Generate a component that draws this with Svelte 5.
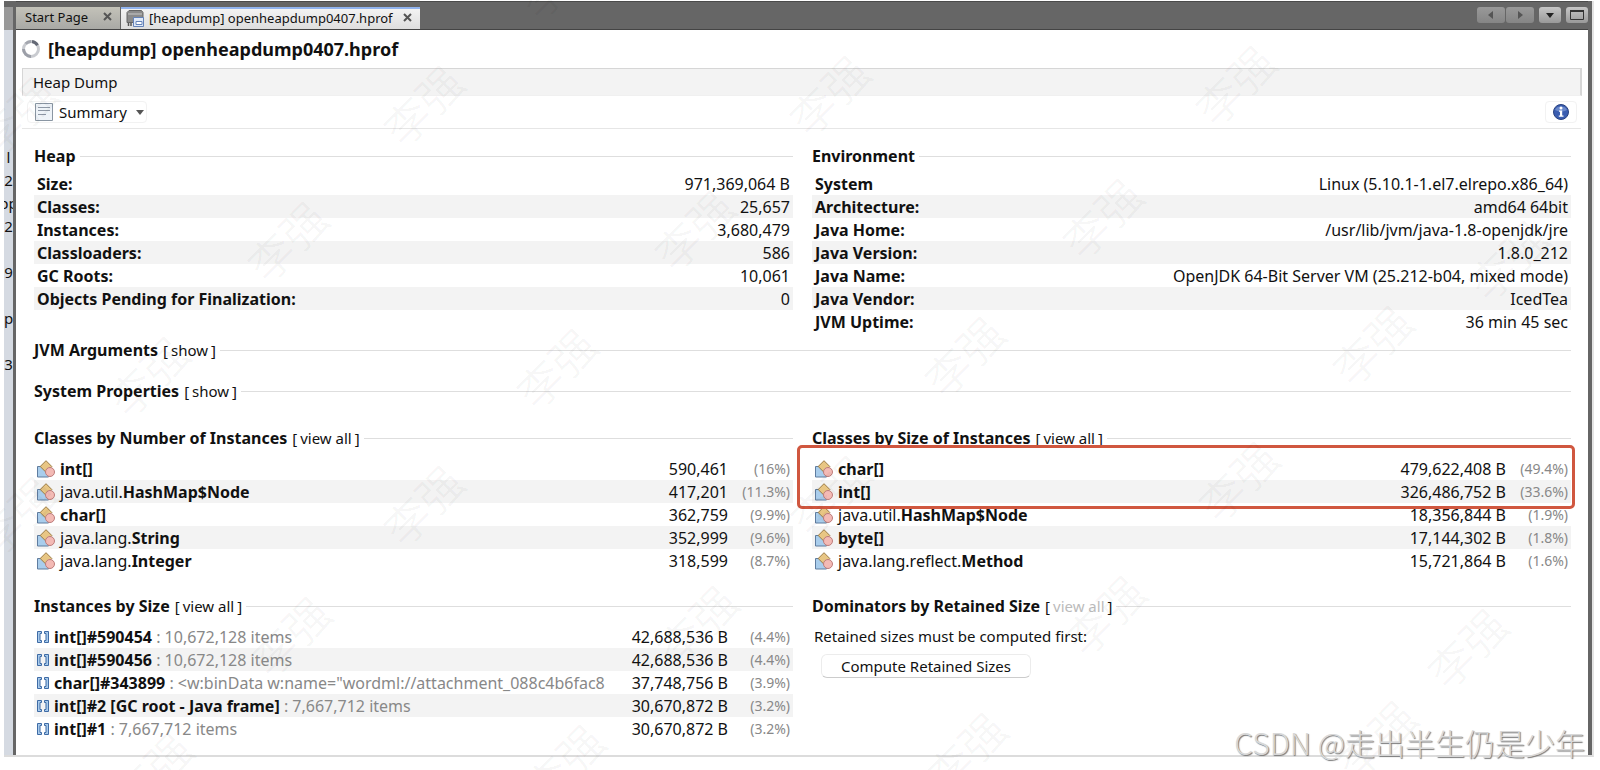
<script lang="ts">
    const edge = ["l", "2", "pp", "2", "", "9", "", "p", "", "3"]

    const heap = [
        ["Size:", "971,369,064 B"],
        ["Classes:", "25,657"],
        ["Instances:", "3,680,479"],
        ["Classloaders:", "586"],
        ["GC Roots:", "10,061"],
        ["Objects Pending for Finalization:", "0"],
    ]

    const environment = [
        ["System", "Linux (5.10.1-1.el7.elrepo.x86_64)"],
        ["Architecture:", "amd64 64bit"],
        ["Java Home:", "/usr/lib/jvm/java-1.8-openjdk/jre"],
        ["Java Version:", "1.8.0_212"],
        ["Java Name:", "OpenJDK 64-Bit Server VM (25.212-b04, mixed mode)"],
        ["Java Vendor:", "IcedTea"],
        ["JVM Uptime:", "36 min 45 sec"],
    ]

    const byCount = [
        { pkg: "", name: "int[]", value: "590,461", share: "(16%)" },
        { pkg: "java.util.", name: "HashMap$Node", value: "417,201", share: "(11.3%)" },
        { pkg: "", name: "char[]", value: "362,759", share: "(9.9%)" },
        { pkg: "java.lang.", name: "String", value: "352,999", share: "(9.6%)" },
        { pkg: "java.lang.", name: "Integer", value: "318,599", share: "(8.7%)" },
    ]

    const bySize = [
        { pkg: "", name: "char[]", value: "479,622,408 B", share: "(49.4%)" },
        { pkg: "", name: "int[]", value: "326,486,752 B", share: "(33.6%)" },
        { pkg: "java.util.", name: "HashMap$Node", value: "18,356,844 B", share: "(1.9%)" },
        { pkg: "", name: "byte[]", value: "17,144,302 B", share: "(1.8%)" },
        { pkg: "java.lang.reflect.", name: "Method", value: "15,721,864 B", share: "(1.6%)" },
    ]

    const instances = [
        { name: "int[]#590454", detail: "10,672,128 items", value: "42,688,536 B", share: "(4.4%)" },
        { name: "int[]#590456", detail: "10,672,128 items", value: "42,688,536 B", share: "(4.4%)" },
        { name: "char[]#343899", detail: '<w:binData w:name="wordml://attachment_088c4b6fac8', value: "37,748,756 B", share: "(3.9%)" },
        { name: "int[]#2 [GC root - Java frame]", detail: "7,667,712 items", value: "30,670,872 B", share: "(3.2%)" },
        { name: "int[]#1", detail: "7,667,712 items", value: "30,670,872 B", share: "(3.2%)" },
    ]

    // centres of the repeated user name stamped over the window
    const stamps = [
        [558, -23], [15, 115], [422, 104], [828, 94], [1234, 84], [1641, 73],
        [286, 240], [693, 229], [1101, 217], [1507, 259],
        [147, 375], [555, 367], [963, 355], [1371, 344],
        [15, 515], [422, 504], [829, 494], [1237, 480], [1641, 469],
        [289, 635], [696, 624], [1104, 614], [1466, 647],
        [151, 771], [563, 763], [965, 751], [1375, 739],
    ]
</script>

{#snippet facts(rows: string[][])}
    <table>
        <tbody>
            {#each rows as [label, value]}
                <tr>
                    <th scope="row">{label}</th>
                    <td class="value">{value}</td>
                </tr>
            {/each}
        </tbody>
    </table>
{/snippet}

{#snippet heading(title: string, action: string = "", disabled: boolean = false)}
    <div class="heading">
        <h2>{title}</h2>
        {#if action}
            <span class="action">[<button {disabled}>{action}</button>]</span>
        {/if}
        <span class="rule"></span>
    </div>
{/snippet}

{#snippet classTable(rows: typeof byCount)}
    <table>
        <tbody>
            {#each rows as row}
                <tr>
                    <td>
                        <span class="entry">
                            <svg class="class-icon" viewBox="0 0 18 18" aria-hidden="true">
                                <path d="M.5 6.500h7l4 4v6.500H.5z" fill="#a9cdec" stroke="#5f7c9f" />
                                <path d="M9 .7l5.800 5.800L9 12.300 3.200 6.500z" fill="#e8c684" stroke="#9a7a43" />
                                <circle cx="13" cy="12" r="4.500" fill="#f3bab5" stroke="#bd7c7b" />
                            </svg>
                            <span>{row.pkg}<b>{row.name}</b></span>
                        </span>
                    </td>
                    <td class="value">{row.value}</td>
                    <td class="share">{row.share}</td>
                </tr>
            {/each}
        </tbody>
    </table>
{/snippet}

<div class="window">
    <aside>
        <div class="edge-top"></div>
        {#each edge as text}
            <span>{text}</span>
        {/each}
    </aside>

    <div class="main">
        <nav>
            <div class="tab">
                <a href="#start">Start Page</a>
                <button class="close" aria-label="Close Start Page">
                    <svg viewBox="0 0 9 9"><path d="M1 1l7 7M8 1l-7 7" /></svg>
                </button>
            </div>
            <div class="tab active">
                <svg class="tab-icon" viewBox="0 0 18 18" aria-hidden="true">
                    <path d="M3 1.500h12.500l1.500 2v10H1v-10z" fill="#8b8b8b" stroke="#666" />
                    <path d="M2 5h14" stroke="#c8c8c8" />
                    <path d="M2.500 14v3M5 14v3" stroke="#555" stroke-width="1.500" />
                    <path d="M7.500 8.500h10v9h-10z" fill="#dfe9f8" stroke="#6583b9" />
                    <path d="M10 12.500h6v3h-6z" fill="#fff" stroke="#6583b9" />
                </svg>
                <a href="#heap">[heapdump] openheapdump0407.hprof</a>
                <button class="close" aria-label="Close heap dump">
                    <svg viewBox="0 0 9 9"><path d="M1 1l7 7M8 1l-7 7" /></svg>
                </button>
            </div>
            <div class="tab-controls">
                <div class="pair">
                    <button disabled aria-label="Previous tab"><svg viewBox="0 0 8 8"><path d="M6 0v8L1 4z" /></svg></button>
                    <button disabled aria-label="Next tab"><svg viewBox="0 0 8 8"><path d="M2 0v8l5-4z" /></svg></button>
                </div>
                <button aria-label="List tabs"><svg viewBox="0 0 8 8"><path d="M0 2h8L4 7z" /></svg></button>
                <button aria-label="Maximize"><svg class="max" viewBox="0 0 14 10"><path d="M.5 .5h13v9H.5z" fill="none" stroke="#333" /><path d="M0 1h14" stroke="#333" stroke-width="2" /></svg></button>
            </div>
        </nav>

        <div class="view">
            <header>
                <svg viewBox="0 0 18 18" aria-hidden="true">
                    <circle cx="9" cy="9" r="7.500" fill="none" stroke="#c9cbd0" stroke-width="3" />
                    <path d="M1.500 9a7.500 7.500 0 0 0 7.500 7.500" fill="none" stroke="#9c9fa8" stroke-width="3" />
                    <path d="M3.700 3.700A7.500 7.500 0 0 1 9 1.500" fill="none" stroke="#a4a7af" stroke-width="3" />
                    <path d="M10 1.600a7.500 7.500 0 0 1 5.500 3.700" fill="none" stroke="#636875" stroke-width="3" />
                </svg>
                <h1>[heapdump] openheapdump0407.hprof</h1>
            </header>
            <div class="section-bar">Heap Dump</div>
            <div class="toolbar">
                <button class="summary">
                    <svg viewBox="0 0 18 18" aria-hidden="true">
                        <path d="M.5 .5h17v17H.5z" fill="#eef3f8" stroke="#8a96a3" />
                        <path d="M3 4.500h12M3 7.500h12M3 11.500h8" stroke="#8e98a6" />
                    </svg>
                    Summary
                    <svg class="caret" viewBox="0 0 8 5" aria-hidden="true"><path d="M0 0h8L4 5z" fill="#555" /></svg>
                </button>
                <button class="info" aria-label="Info">
                    <svg viewBox="0 0 16 16">
                        <circle cx="8" cy="8" r="7.500" fill="#3a5db0" stroke="#2a437f" />
                        <path d="M2 6a6.300 5 0 0 1 12 0q-6 3-12 0z" fill="#7f9bd6" opacity=".7" />
                        <circle cx="8" cy="4" r="1.500" fill="#fff" />
                        <path d="M6 6.500h3.200v5h1.300v1.300H5.800v-1.300h1.200v-3.700H6z" fill="#fff" />
                    </svg>
                </button>
            </div>

            <div class="content">
                <div class="columns">
                    <section class="tight">
                        {@render heading("Heap")}
                        {@render facts(heap)}
                    </section>
                    <section class="tight">
                        {@render heading("Environment")}
                        {@render facts(environment)}
                    </section>
                </div>

                <div class="collapsed">
                    {@render heading("JVM Arguments", "show")}
                    {@render heading("System Properties", "show")}
                </div>

                <div class="columns">
                    <section>
                        {@render heading("Classes by Number of Instances", "view all")}
                        {@render classTable(byCount)}
                    </section>
                    <section>
                        {@render heading("Classes by Size of Instances", "view all")}
                        <div class="marked">
                            {@render classTable(bySize)}
                            <div class="mark"></div>
                        </div>
                    </section>
                    <section>
                        {@render heading("Instances by Size", "view all")}
                        <table>
                            <tbody>
                                {#each instances as row}
                                    <tr>
                                        <td>
                                            <span class="entry">
                                                <svg class="array-icon" viewBox="0 0 12 12" aria-hidden="true">
                                                    <path d="M.5 .5h4v2H3v7h1.500v2h-4zM11.500 .5h-4v2H9v7H7.500v2h4z" fill="#a9cbec" stroke="#3e6ba5" />
                                                </svg>
                                                <span><b>{row.name}</b> <span class="detail">: {row.detail}</span></span>
                                            </span>
                                        </td>
                                        <td class="value">{row.value}</td>
                                        <td class="share">{row.share}</td>
                                    </tr>
                                {/each}
                            </tbody>
                        </table>
                    </section>
                    <section>
                        {@render heading("Dominators by Retained Size", "view all", true)}
                        <p>Retained sizes must be computed first:</p>
                        <button class="compute">Compute Retained Sizes</button>
                    </section>
                </div>
            </div>
        </div>
    </div>
</div>

<div class="stamps" aria-hidden="true">
    {#each stamps as [x, y]}
        <span style="left: {x}px; top: {y}px">李强</span>
    {/each}
</div>
<div class="credit">CSDN @走出半生仍是少年</div>

<style>
    :global(body) {
        background: #fff;
        color: #111;
        font: 15px/20px "Noto Sans", "Noto Sans CJK SC", sans-serif;
    }

    :global(#app) {
        position: relative;
        overflow: hidden;
        min-height: 100vh;
    }

    button {
        font: inherit;
        color: inherit;
        background: none;
        border: 0;
        padding: 0;
    }

    a {
        color: inherit;
        text-decoration: none;
    }

    svg {
        display: block;
        flex: none;
    }

    .window {
        display: flex;
        margin: 1px 6px 0 4px;
        border-right: 2px solid #e4e4e4;
        border-bottom: 2px solid #dcdcdc;
    }

    aside {
        display: flex;
        flex-direction: column;
        width: 9px;
        overflow: hidden;
        background: #d5dae2;
    }

    .edge-top {
        height: 23px;
        margin-bottom: 116px;
        border-top: 6px solid #666;
        background: #999;
    }

    aside span {
        display: flex;
        justify-content: center;
        height: 23px;
        line-height: 23px;
    }

    .main {
        flex: 1;
        min-width: 0;
        background: #666;
        padding: 0 4px 0 3px;
    }

    nav {
        display: flex;
        gap: 1px;
        padding-top: 5px;
        border-top: 1px solid #4b4b4b;
        border-bottom: 1px solid #444;
        font-size: 13px;
        line-height: 18px;
    }

    .tab {
        display: flex;
        align-items: center;
        box-sizing: border-box;
        height: 22px;
        padding: 0 8px 3px 9px;
        gap: 15px;
        background: linear-gradient(#c3c2b9, #a9a9a5);
    }

    .active {
        gap: 5px;
        padding: 0 8px 3px 5px;
        border-top: 2px solid #91b4f0;
        background: linear-gradient(#f3f3f3, #dedede);
    }

    .active .close {
        margin-left: 5px;
    }

    .tab-icon {
        width: 18px;
        height: 18px;
    }

    .close svg {
        width: 9px;
        height: 9px;
        stroke: #555;
        stroke-width: 2;
    }

    .tab-controls {
        display: flex;
        gap: 5px;
        margin-left: auto;
        height: 16px;
    }

    .pair {
        display: flex;
        gap: 1px;
    }

    .tab-controls button {
        display: flex;
        align-items: center;
        justify-content: center;
        width: 22px;
        border-radius: 3px;
        background: linear-gradient(#c6c6c6, #999);
        fill: #222;
    }

    .tab-controls button:disabled {
        width: 28px;
        background: linear-gradient(#999, #858585);
        fill: #555;
    }

    .tab-controls svg {
        width: 8px;
        height: 8px;
    }

    .tab-controls .max {
        width: 14px;
        height: 10px;
    }

    .view {
        background: #fff;
    }

    header {
        display: flex;
        align-items: center;
        gap: 8px;
        height: 38px;
        padding-left: 6px;
    }

    header svg {
        width: 18px;
        height: 18px;
    }

    h1 {
        margin: 0;
        font-size: 18px;
        line-height: 24px;
    }

    .section-bar {
        height: 26px;
        margin: 0 6px;
        padding-left: 10px;
        border: 1px solid #d6d6d6;
        border-bottom-color: #f0f0f0;
        border-right-width: 2px;
        background: #f3f3f3;
        line-height: 26px;
    }

    .toolbar {
        display: flex;
        justify-content: space-between;
        align-items: center;
        height: 32px;
        margin: 0 7px 0 6px;
        padding: 0 4px 0 5px;
        border-bottom: 1px solid #e6e6e6;
    }

    .summary, .info {
        display: flex;
        align-items: center;
        height: 22px;
        border: 1px solid #f2f2f2;
        border-radius: 4px;
    }

    .summary {
        gap: 6px;
        padding: 0 2px 0 7px;
    }

    .summary svg {
        width: 18px;
        height: 18px;
    }

    .summary .caret {
        width: 8px;
        height: 5px;
        margin-left: 3px;
    }

    .info {
        padding: 0 7px;
    }

    .info svg {
        width: 16px;
        height: 16px;
    }

    .content {
        padding: 17px 17px 15px 18px;
    }

    .columns {
        display: grid;
        grid-template-columns: minmax(0, 1fr) minmax(0, 1fr);
        gap: 24px 19px;
    }

    .heading {
        display: flex;
        align-items: center;
        height: 20px;
        margin-bottom: 9px;
        white-space: nowrap;
    }

    .tight .heading {
        margin-bottom: 6px;
    }

    h2 {
        margin: 0;
        font-size: 16px;
        line-height: 20px;
    }

    .action {
        margin-left: 5px;
    }

    .action button {
        padding: 0 3px;
    }

    .action button:disabled {
        color: #bbb;
    }

    .rule {
        flex: 1;
        margin-left: 4px;
        border-top: 1px solid #dedede;
    }

    .collapsed {
        display: grid;
        gap: 12px;
        padding: 7px 0 18px;
    }

    table {
        width: 100%;
        border-collapse: collapse;
        font-size: 16px;
    }

    tr {
        height: 23px;
    }

    tr:nth-child(even) {
        background: #f3f3f3;
    }

    th, td {
        padding: 0 3px;
        text-align: left;
        white-space: nowrap;
    }

    .value {
        text-align: right;
    }

    .share {
        width: 56px;
        text-align: right;
        font-size: 14px;
        color: #888;
    }

    .entry {
        display: flex;
        align-items: center;
        gap: 5px;
    }

    .class-icon {
        width: 18px;
        height: 18px;
    }

    .array-icon {
        width: 12px;
        height: 12px;
    }

    .detail {
        color: #888;
    }

    .marked {
        position: relative;
    }

    .mark {
        position: absolute;
        top: -12px;
        right: -4px;
        left: -15px;
        height: 58px;
        border: 3px solid #d0573f;
        border-radius: 5px;
    }

    p {
        margin: 0 2px;
        line-height: 23px;
    }

    .compute {
        margin: 6px 9px;
        height: 24px;
        padding: 0 19px;
        border: 1px solid #ececec;
        border-bottom-color: #ccc;
        border-radius: 6px;
        background: #fff;
        line-height: 20px;
    }

    .stamps {
        position: absolute;
        inset: 0;
        overflow: hidden;
        pointer-events: none;
    }

    .stamps span {
        position: absolute;
        font: 45px/45px "Noto Sans CJK SC", sans-serif;
        color: rgba(0, 0, 0, 0.03);
        white-space: nowrap;
        transform: translate(-50%, -50%) rotate(-45deg);
    }

    .credit {
        position: absolute;
        right: 15px;
        bottom: 10px;
        color: #d8d8d8;
        font: 300 30px/36px "Noto Sans CJK SC", sans-serif;
        text-shadow: 1px 1px 1px #777;
    }
</style>
